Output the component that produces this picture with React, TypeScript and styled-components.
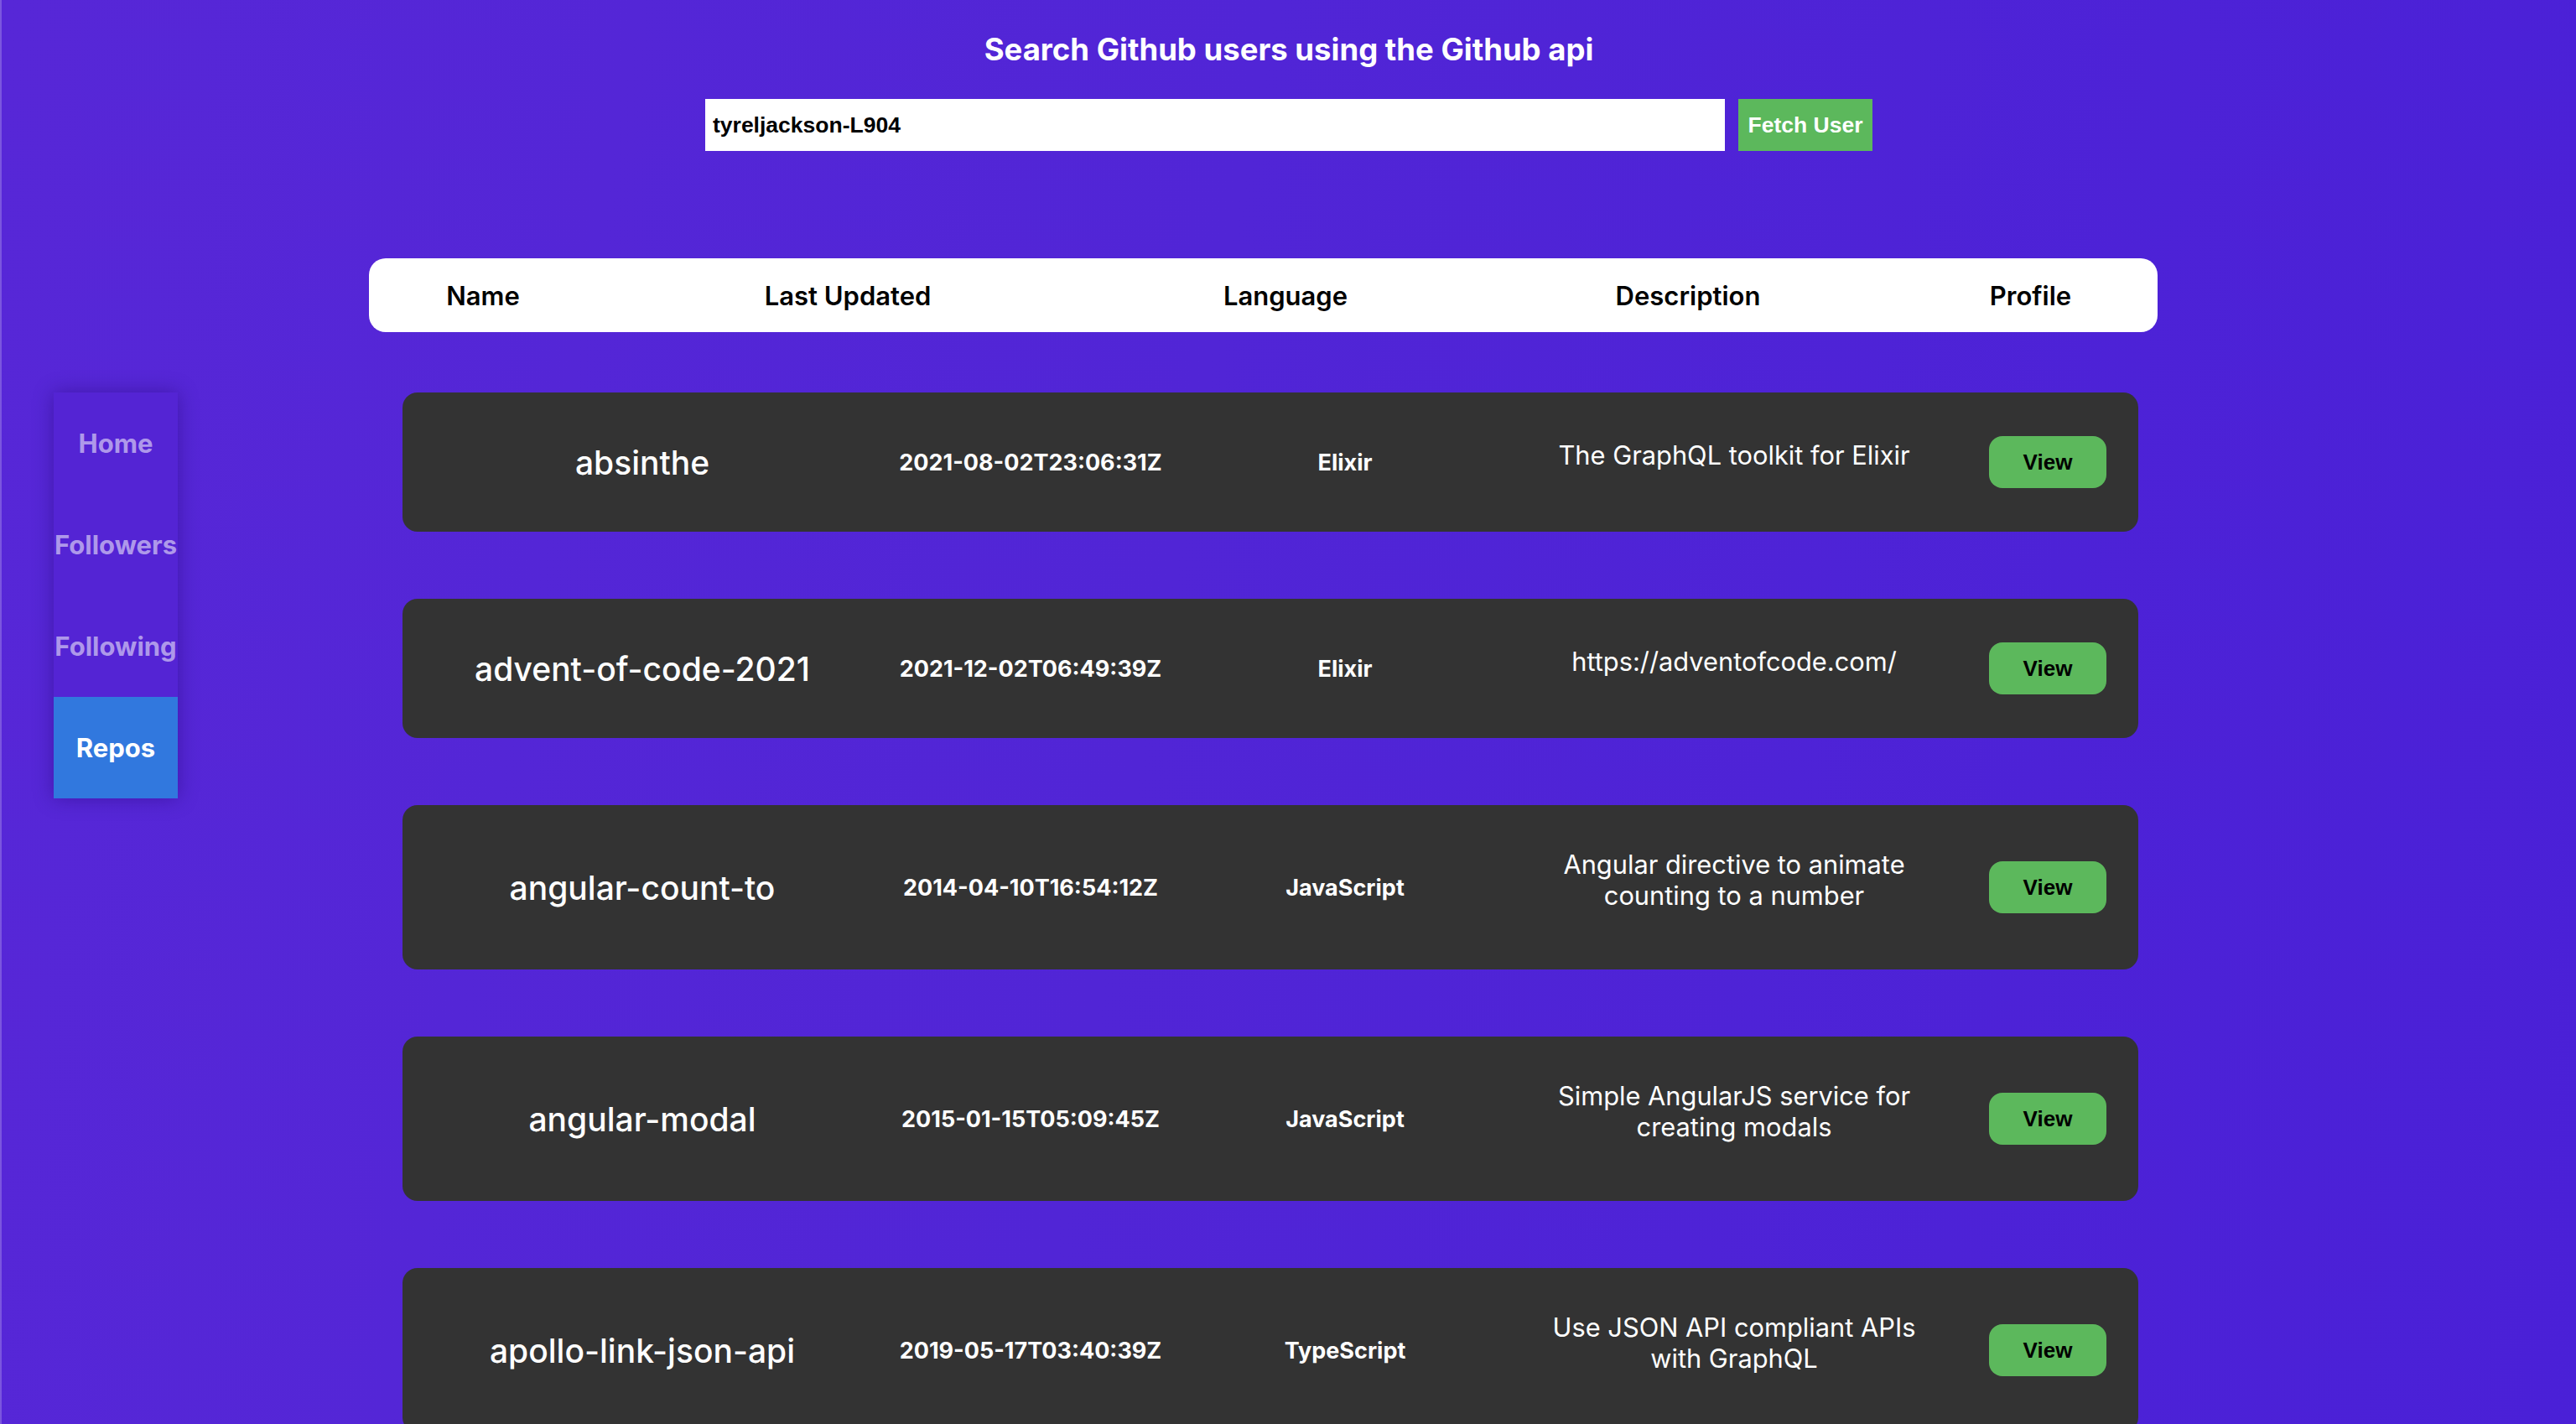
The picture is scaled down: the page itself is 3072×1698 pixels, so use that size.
import React from "react";
import styled, { createGlobalStyle } from "styled-components";

const GlobalStyle = createGlobalStyle`
  html, body {
    margin: 0;
    padding: 0;
  }
  body {
    min-height: 100vh;
    background: linear-gradient(100deg, #5727d7 0%, #5125d6 45%, #4a20d7 100%);
    font-family: Inter, "Noto Sans", sans-serif;
    overflow: hidden;
  }
  * { box-sizing: border-box; }
`;

const Page = styled.div`
  min-height: 100vh;
  display: flex;
  flex-direction: column;
  border-left: 2px solid rgba(255, 255, 255, 0.22);
`;

const Title = styled.h1`
  margin: 0;
  padding-top: 39px;
  font-family: Inter, sans-serif;
  font-size: 36.5px;
  line-height: 40px;
  font-weight: 700;
  color: #ffffff;
  text-align: center;
`;

const SearchRow = styled.form`
  margin-top: 39px;
  display: flex;
  justify-content: center;
  gap: 16px;
`;

const SearchInput = styled.input`
  width: 1216px;
  height: 62px;
  border: none;
  outline: none;
  padding: 0 9px;
  background: #ffffff;
  color: #000000;
  font-family: "Liberation Sans", Arial, sans-serif;
  font-size: 26.5px;
  font-weight: 700;
`;

const FetchButton = styled.button`
  width: 160px;
  height: 62px;
  border: none;
  background: #5cb85c;
  color: #ffffff;
  font-family: "Liberation Sans", Arial, sans-serif;
  font-size: 26.5px;
  font-weight: 700;
  padding: 0;
  cursor: pointer;
`;

const HeaderBar = styled.div`
  margin-top: 128px;
  margin-left: 438px;
  width: 2133px;
  height: 88px;
  background: #ffffff;
  border-radius: 20px;
  display: grid;
  grid-template-columns: 272px 598px 446px 514px 1fr;
  align-items: center;
`;

const HeaderLabel = styled.div`
  text-align: center;
  font-family: Inter, sans-serif;
  font-size: 31px;
  font-weight: 600;
  color: #000000;
`;

const ContentRow = styled.div`
  margin-top: 72px;
  display: flex;
  align-items: flex-start;
`;

const SideNav = styled.nav`
  margin-left: 62px;
  width: 148px;
  display: flex;
  flex-direction: column;
  background: #5424d4;
  box-shadow: 0 0 22px rgba(30, 5, 100, 0.4);
`;

const NavItem = styled.a<{ $active?: boolean }>`
  height: 121px;
  display: flex;
  align-items: center;
  justify-content: center;
  font-family: Inter, sans-serif;
  font-size: 31px;
  font-weight: 700;
  white-space: nowrap;
  text-decoration: none;
  color: ${(p) => (p.$active ? "#ffffff" : "rgba(255, 255, 255, 0.55)")};
  background: ${(p) => (p.$active ? "#3178de" : "transparent")};
`;

const CardList = styled.div`
  margin-left: 268px;
  width: 2070px;
  display: flex;
  flex-direction: column;
  gap: 80px;
`;

const Card = styled.div`
  background: #333333;
  border-radius: 18px;
  padding: 52px 0;
  display: grid;
  grid-template-columns: 572px 354px 396px 532px 1fr;
  align-items: center;
  color: #ffffff;
`;

const RepoName = styled.div`
  text-align: center;
  font-family: Inter, sans-serif;
  font-size: 39px;
  font-weight: 500;
`;

const Updated = styled.div`
  text-align: center;
  font-family: Inter, sans-serif;
  font-size: 27px;
  font-weight: 700;
`;

const Language = styled.div`
  text-align: center;
  font-family: Inter, sans-serif;
  font-size: 27px;
  font-weight: 700;
`;

const DescCell = styled.div`
  display: flex;
  justify-content: center;
`;

const Description = styled.p`
  margin: 0 0 18px;
  max-width: 470px;
  text-align: center;
  font-family: Inter, sans-serif;
  font-size: 30.8px;
  line-height: 37px;
  font-weight: 400;
`;

const ViewCell = styled.div`
  display: flex;
  justify-content: center;
`;

const ViewButton = styled.button`
  width: 140px;
  height: 62px;
  border: none;
  border-radius: 16px;
  background: #5cb85c;
  color: #000000;
  font-family: "Liberation Sans", Arial, sans-serif;
  font-size: 26px;
  font-weight: 700;
  padding: 0;
  cursor: pointer;
`;

type Repo = {
  name: string;
  updated: string;
  language: string;
  description: string;
};

const repos: Repo[] = [
  {
    name: "absinthe",
    updated: "2021-08-02T23:06:31Z",
    language: "Elixir",
    description: "The GraphQL toolkit for Elixir",
  },
  {
    name: "advent-of-code-2021",
    updated: "2021-12-02T06:49:39Z",
    language: "Elixir",
    description: "https://adventofcode.com/",
  },
  {
    name: "angular-count-to",
    updated: "2014-04-10T16:54:12Z",
    language: "JavaScript",
    description: "Angular directive to animate counting to a number",
  },
  {
    name: "angular-modal",
    updated: "2015-01-15T05:09:45Z",
    language: "JavaScript",
    description: "Simple AngularJS service for creating modals",
  },
  {
    name: "apollo-link-json-api",
    updated: "2019-05-17T03:40:39Z",
    language: "TypeScript",
    description: "Use JSON API compliant APIs with GraphQL",
  },
];

const navItems = ["Home", "Followers", "Following", "Repos"];

export default function App() {
  return (
    <>
      <GlobalStyle />
      <Page>
        <Title>Search Github users using the Github api</Title>
        <SearchRow onSubmit={(e) => e.preventDefault()}>
          <SearchInput defaultValue="tyreljackson-L904" />
          <FetchButton type="submit">Fetch User</FetchButton>
        </SearchRow>
        <HeaderBar>
          <HeaderLabel>Name</HeaderLabel>
          <HeaderLabel>Last Updated</HeaderLabel>
          <HeaderLabel>Language</HeaderLabel>
          <HeaderLabel>Description</HeaderLabel>
          <HeaderLabel>Profile</HeaderLabel>
        </HeaderBar>
        <ContentRow>
          <SideNav>
            {navItems.map((item) => (
              <NavItem key={item} href="#" $active={item === "Repos"}>
                {item}
              </NavItem>
            ))}
          </SideNav>
          <CardList>
            {repos.map((r) => (
              <Card key={r.name}>
                <RepoName>{r.name}</RepoName>
                <Updated>{r.updated}</Updated>
                <Language>{r.language}</Language>
                <DescCell>
                  <Description>{r.description}</Description>
                </DescCell>
                <ViewCell>
                  <ViewButton>View</ViewButton>
                </ViewCell>
              </Card>
            ))}
          </CardList>
        </ContentRow>
      </Page>
    </>
  );
}
